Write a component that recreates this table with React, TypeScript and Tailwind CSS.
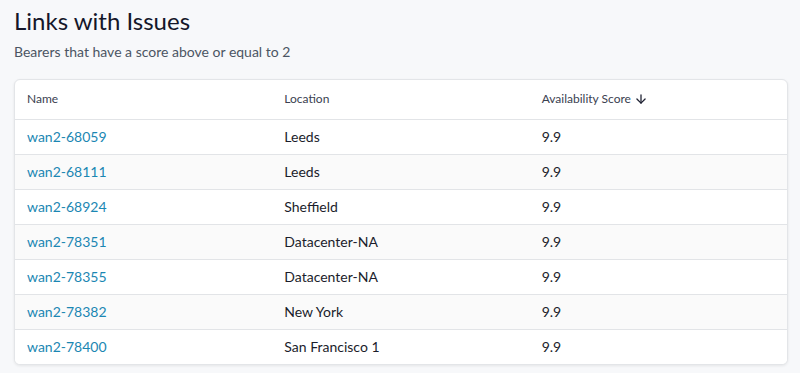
import { ArrowDown } from 'lucide-react';

interface Link {
  name: string;
  location: string;
  score: number;
}

const links: Link[] = [
  { name: 'wan2-68059', location: 'Leeds', score: 9.9 },
  { name: 'wan2-68111', location: 'Leeds', score: 9.9 },
  { name: 'wan2-68924', location: 'Sheffield', score: 9.9 },
  { name: 'wan2-78351', location: 'Datacenter-NA', score: 9.9 },
  { name: 'wan2-78355', location: 'Datacenter-NA', score: 9.9 },
  { name: 'wan2-78382', location: 'New York', score: 9.9 },
  { name: 'wan2-78400', location: 'San Francisco 1', score: 9.9 },
];

export default function App() {
  return (
    <div className="min-h-[373px] w-[800px] bg-[#f7f8fa] px-[14px] pt-[7px] font-['Lato',sans-serif]">
      <h1 className="text-[24px] leading-[28px] text-[#141629]">Links with Issues</h1>
      <p className="mt-[8px] text-[14px] leading-[17px] text-[#4b5563]">Bearers that have a score above or equal to 2</p>
      <div className="mt-[19px] w-[774px] overflow-hidden rounded-[6px] border border-[#e3e5e8] bg-white shadow-[0_1px_3px_rgba(0,0,0,0.08)]">
        <table className="w-full table-fixed text-left">
          <thead>
            <tr className="h-[39px] border-b border-[#e2e4e7]">
              <th className="pl-[12px] text-[12px] font-normal text-[#3a4150]">Name</th>
              <th className="pl-[12px] text-[12px] font-normal text-[#3a4150]">Location</th>
              <th className="pl-[12px] text-[12px] font-normal text-[#3a4150]">
                <span className="inline-flex items-center gap-[3px]">
                  Availability Score
                  <ArrowDown size={14} strokeWidth={2.2} className="text-[#1f2233]" />
                </span>
              </th>
            </tr>
          </thead>
          <tbody>
            {links.map((link, idx) => (
              <tr
                key={link.name}
                className={`h-[35px] text-[14px] ${idx < links.length - 1 ? 'border-b border-[#e2e4e7]' : ''} ${
                  idx % 2 === 1 ? 'bg-[#fafafa]' : 'bg-white'
                }`}
              >
                <td className="pl-[12px] text-[#1b87b3]">{link.name}</td>
                <td className="pl-[12px] text-[#1b1d2b]">{link.location}</td>
                <td className="pl-[12px] text-[#1b1d2b]">{link.score.toFixed(1)}</td>
              </tr>
            ))}
          </tbody>
        </table>
      </div>
    </div>
  );
}
